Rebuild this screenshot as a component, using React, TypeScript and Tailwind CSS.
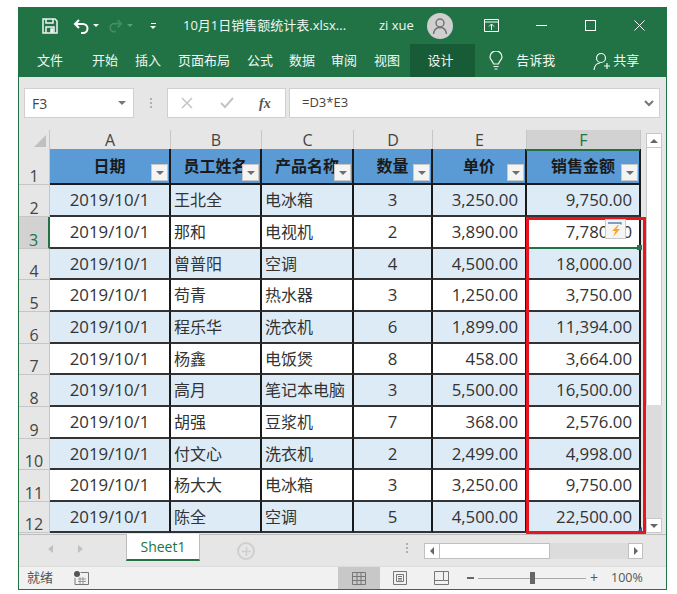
const font = { fontFamily: '"Open Sans","Noto Sans CJK SC",sans-serif' };

const rows: [string, string, string, string, string, string][] = [
  ['2019/10/1', '王北全', '电冰箱', '3', '3,250.00', '9,750.00'],
  ['2019/10/1', '那和', '电视机', '2', '3,890.00', '7,780.00'],
  ['2019/10/1', '曾普阳', '空调', '4', '4,500.00', '18,000.00'],
  ['2019/10/1', '苟青', '热水器', '3', '1,250.00', '3,750.00'],
  ['2019/10/1', '程乐华', '洗衣机', '6', '1,899.00', '11,394.00'],
  ['2019/10/1', '杨鑫', '电饭煲', '8', '458.00', '3,664.00'],
  ['2019/10/1', '高月', '笔记本电脑', '3', '5,500.00', '16,500.00'],
  ['2019/10/1', '胡强', '豆浆机', '7', '368.00', '2,576.00'],
  ['2019/10/1', '付文心', '洗衣机', '2', '2,499.00', '4,998.00'],
  ['2019/10/1', '杨大大', '电冰箱', '3', '3,250.00', '9,750.00'],
  ['2019/10/1', '陈全', '空调', '5', '4,500.00', '22,500.00'],
];
const rowH = [32, 32, 31, 32, 32, 31, 32, 32, 31, 32, 31];
const cols = 'grid grid-cols-[31px_121px_91px_92px_79px_94px_114px]';

function Filter() {
  return (
    <div className="absolute right-[1px] bottom-[2px] w-[17px] h-[17px] bg-[#f4f4f4] border border-[#c8c8c8] flex items-center justify-center">
      <div className="w-0 h-0 border-l-[4px] border-r-[4px] border-t-[4px] border-l-transparent border-r-transparent border-t-[#6e6e6e]" />
    </div>
  );
}

function Head({ t }: { t: string }) {
  return (
    <div className="relative bg-[#5b9bd5] border-r-2 border-b-2 border-[#1a1a1a] flex justify-center overflow-hidden">
      <span className="text-[16px] leading-[24px] font-bold text-[#1a1a1a] mt-[5px] whitespace-nowrap">{t}</span>
      <Filter />
    </div>
  );
}

function Cell({ t, align, band, selected, cjk }: { t: string; align: string; band: boolean; selected?: boolean; cjk?: boolean }) {
  return (
    <div className={`relative flex items-center ${align} ${band ? 'bg-[#ddebf7]' : 'bg-white'} border-r-2 border-b-2 ${selected ? 'border-b-[#217346]' : 'border-b-[#333333]'} border-r-[#1a1a1a] ${cjk ? 'text-[16px]' : 'text-[16.8px]'} text-[#333333] overflow-hidden whitespace-nowrap`}>
      {t}
    </div>
  );
}

function RowNo({ n, h, active }: { n: number; h: number; active?: boolean }) {
  return (
    <div style={{ height: h }} className={`flex items-end justify-center text-[16px] leading-none border-b border-[#c6c6c6] ${active ? 'bg-[#d2d2d2] text-[#217346] border-r-2 border-r-[#217346]' : 'bg-[#e6e6e6] text-[#444444] border-r border-r-[#c6c6c6]'}`}>
      {n}
    </div>
  );
}

function ColHead({ t, active }: { t: string; active?: boolean }) {
  return <div className={`flex items-center justify-center text-[16px] leading-none border-r border-[#c6c6c6] ${active ? 'bg-[#d2d2d2] text-[#217346]' : 'text-[#444444]'}`}>{t}</div>;
}

export default function App() {
  return (
    <div className="w-[677px] h-[594px] bg-white pt-[7px] pl-[18px]" style={font}>
      <div className="relative w-[649px] h-[583px] bg-[#e6e6e6] border-l border-r border-b border-[#217346] flex flex-col overflow-hidden">
        {/* Title bar */}
        <div className="h-[37px] bg-[#217346] flex items-center text-white shrink-0">
          <svg className="ml-[23px]" width="16" height="16" viewBox="0 0 16 16" fill="none" stroke="#f0f5f2" strokeWidth="1.5">
            <path d="M1 1h12l2 2v12H1z" /><path d="M4 1v4h7V1M4 15V9h8v6" /><path fill="#f0f5f2" d="M9 11h1.5v3H9z" />
          </svg>
          <svg className="ml-[15px]" width="17" height="16" viewBox="0 0 17 16" fill="none" stroke="#ffffff" strokeWidth="2">
            <path d="M6 2 2 6l4 4" /><path d="M2 6h8a4.5 4.5 0 0 1 0 9H8" />
          </svg>
          <div className="ml-[3px] w-0 h-0 border-l-[3px] border-r-[3px] border-t-[3px] border-l-transparent border-r-transparent border-t-white" />
          <svg className="ml-[9px] opacity-60" width="15" height="15" viewBox="0 0 17 16" fill="none" stroke="#5f9c7c" strokeWidth="2">
            <path d="M11 2l4 4-4 4" /><path d="M15 6H7a4.5 4.5 0 0 0 0 9h2" />
          </svg>
          <div className="ml-[4px] w-0 h-0 border-l-[3px] border-r-[3px] border-t-[3px] border-l-transparent border-r-transparent border-t-[#5f9c7c]" />
          <div className="ml-[17px] flex flex-col items-center gap-[2px]">
            <div className="w-[5px] h-[1px] bg-white" />
            <div className="w-0 h-0 border-l-[3px] border-r-[3px] border-t-[3px] border-l-transparent border-r-transparent border-t-white" />
          </div>
          <span className="ml-[27px] w-[180px] text-[13px] whitespace-nowrap text-[#f2f7f4]">10月1日销售额统计表.xlsx...</span>
          <span className="ml-[16px] text-[13px] text-[#f2f7f4]">zi xue</span>
          <div className="ml-[13px] w-[26px] h-[26px] rounded-full bg-[#cfcfcf] flex items-center justify-center">
            <svg width="18" height="18" viewBox="0 0 18 18" fill="none" stroke="#707070" strokeWidth="1.4">
              <circle cx="9" cy="6" r="4" /><path d="M2.5 17c.5-4 3-6.5 6.5-6.5s6 2.500 6.500 6.500" />
            </svg>
          </div>
          <svg className="ml-[31px]" width="15" height="13" viewBox="0 0 15 13" fill="none" stroke="#ffffff" strokeWidth="1">
            <path d="M.5.5h14v12H.5zM.5 3h14M7.500 11V5.500M5 7.500l2.500-2.500L10 7.500" />
          </svg>
          <div className="ml-[37px] w-[11px] h-[1px] bg-white" />
          <div className="ml-[38px] w-[11px] h-[11px] border border-white" />
          <svg className="ml-[38px]" width="11" height="11" viewBox="0 0 11 11" stroke="#ffffff" strokeWidth="1"><path d="M.5.5l10 10M10.500.5l-10 10" /></svg>
        </div>
        {/* Ribbon tabs */}
        <div className="h-[33px] bg-[#217346] flex items-center text-[13px] text-[#f2f7f4] shrink-0 relative">
          <span className="ml-[18px]">文件</span>
          <span className="ml-[29px]">开始</span>
          <span className="ml-[17px]">插入</span>
          <span className="ml-[17px]">页面布局</span>
          <span className="ml-[17px]">公式</span>
          <span className="ml-[16px]">数据</span>
          <span className="ml-[16px]">审阅</span>
          <span className="ml-[17px]">视图</span>
          <div className="ml-[10px] w-[65px] h-full bg-[#185c37] flex items-center justify-center pr-[4px]">设计</div>
          <svg className="ml-[14px]" width="14" height="19" viewBox="0 0 14 19" fill="none" stroke="#f2f7f4" strokeWidth="1.200">
            <path d="M4.500 13C4 10 1 9 1 6a6 6 0 0 1 12 0c0 3-3 4-3.500 7zM4.500 15.500h5M5.500 18h3" />
          </svg>
          <span className="ml-[13px]">告诉我</span>
          <svg className="ml-[38px]" width="17" height="18" viewBox="0 0 17 18" fill="none" stroke="#f2f7f4" strokeWidth="1.200">
            <circle cx="8" cy="6" r="4.500" /><path d="M1 18c.5-4 3-7 6-7M11 14h6M14 11v6" />
          </svg>
          <span className="ml-[3px]">共享</span>
        </div>
        {/* Formula bar */}
        <div className="h-[53px] shrink-0 flex items-start pt-[11px] pl-[5px] text-[13px] text-[#444444]">
          <div className="w-[110px] h-[30px] bg-white border border-[#d0d0d0] flex items-center justify-between pl-[7px] pr-[7px]">
            <span className="text-[14px]">F3</span>
            <div className="w-0 h-0 border-l-[4px] border-r-[4px] border-t-[4px] border-l-transparent border-r-transparent border-t-[#777777]" />
          </div>
          <div className="w-[33px] h-[30px] flex flex-col items-center justify-center gap-[2px]">
            <div className="w-[2px] h-[2px] bg-[#b0b0b0]" /><div className="w-[2px] h-[2px] bg-[#b0b0b0]" /><div className="w-[2px] h-[2px] bg-[#b0b0b0]" />
          </div>
          <div className="w-[119px] h-[30px] bg-white border border-[#d0d0d0] flex items-center">
            <svg className="ml-[13px]" width="12" height="12" viewBox="0 0 12 12" stroke="#c4c4c4" strokeWidth="1.500"><path d="M1 1l10 10M11 1 1 11" /></svg>
            <svg className="ml-[27px]" width="14" height="12" viewBox="0 0 14 12" fill="none" stroke="#c4c4c4" strokeWidth="2"><path d="M1 6l4 4 8-9" /></svg>
            <span className="ml-[25px] text-[14px] italic font-bold text-[#555555]" style={{ fontFamily: '"Liberation Serif",serif' }}>fx</span>
          </div>
          <div className="ml-[3px] w-[371px] h-[30px] bg-white border border-[#d0d0d0] flex items-center justify-between pl-[12px] pr-[5px]">
            <span>=D3*E3</span>
            <svg width="10" height="7" viewBox="0 0 10 7" fill="none" stroke="#777777" strokeWidth="2"><path d="M1 1l4 4 4-4" /></svg>
          </div>
        </div>
        {/* Grid + scrollbar */}
        <div className="flex h-[404px] shrink-0 relative">
          <div className="w-[622px] shrink-0 overflow-hidden">
            <div className={`${cols} h-[19px]`}>
              <div className="relative border-r border-[#c6c6c6]">
                <div className="absolute right-[3px] bottom-[2px] w-0 h-0 border-l-[12px] border-b-[12px] border-l-transparent border-b-[#c0c0c0]" />
              </div>
              <ColHead t="A" /><ColHead t="B" /><ColHead t="C" /><ColHead t="D" /><ColHead t="E" /><ColHead t="F" active />
            </div>
            <div className="flex">
              <div className="w-[31px] shrink-0">
                <RowNo n={1} h={36} />
                {rows.map((_, i) => <RowNo key={i} n={i + 2} h={rowH[i]} active={i === 1} />)}
              </div>
              <div className="flex-1">
                <div className="grid grid-cols-[121px_91px_92px_79px_94px_114px] h-[36px]">
                  <Head t="日期" /><Head t="员工姓名" /><Head t="产品名称" /><Head t="数量" /><Head t="单价" /><Head t="销售金额" />
                </div>
                {rows.map((r, i) => (
                  <div key={i} style={{ height: rowH[i] }} className="grid grid-cols-[121px_91px_92px_79px_94px_114px]">
                    <Cell t={r[0]} align="justify-center" band={i % 2 === 0} />
                    <Cell t={r[1]} align="pl-[3px]" band={i % 2 === 0} cjk />
                    <Cell t={r[2]} align="pl-[3px]" band={i % 2 === 0} cjk />
                    <Cell t={r[3]} align="justify-center" band={i % 2 === 0} />
                    <Cell t={r[4]} align="justify-end pr-[7px]" band={i % 2 === 0} />
                    <Cell t={r[5]} align="justify-end pr-[7px]" band={i % 2 === 0} selected={i === 1} />
                  </div>
                ))}
              </div>
            </div>
          </div>
          {/* Vertical scrollbar */}
          <div className="w-[25px] pl-[5px] pr-[4px] pt-[3px] pb-[1px] flex flex-col">
            <div className="h-[15px] bg-white border border-[#c8c8c8] flex items-center justify-center">
              <div className="w-0 h-0 border-l-[4px] border-r-[4px] border-b-[4px] border-l-transparent border-r-transparent border-b-[#666666]" />
            </div>
            <div className="h-[257px] bg-white border-x border-[#c8c8c8]" />
            <div className="flex-1 bg-[#dcdcdc]" />
            <div className="h-[15px] bg-white border border-[#c8c8c8] flex items-center justify-center">
              <div className="w-0 h-0 border-l-[4px] border-r-[4px] border-t-[4px] border-l-transparent border-r-transparent border-t-[#666666]" />
            </div>
          </div>
        </div>
        {/* Sheet tab bar */}
        <div className="h-[32px] shrink-0 flex items-start relative border-t border-[#bdbdbd]">
          <div className="ml-[29px] mt-[10px] flex gap-[25px]">
            <div className="w-0 h-0 border-t-[4px] border-b-[4px] border-r-[5px] border-t-transparent border-b-transparent border-r-[#c0c0c0]" />
            <div className="w-0 h-0 border-t-[4px] border-b-[4px] border-l-[5px] border-t-transparent border-b-transparent border-l-[#c0c0c0]" />
          </div>
          <div className="ml-[43px] -mt-[1px] w-[74px] h-[27px] bg-white border-x border-[#bdbdbd] border-b-2 border-b-[#217346] flex items-center justify-center text-[14px] text-[#217346]">Sheet1</div>
          <div className="ml-[37px] mt-[7px] w-[18px] h-[18px] rounded-full border-2 border-[#cfcfcf] flex items-center justify-center">
            <svg width="9" height="9" viewBox="0 0 9 9" stroke="#cfcfcf" strokeWidth="1.500"><path d="M4.500 0v9M0 4.500h9" /></svg>
          </div>
          <div className="ml-[151px] mt-[8px] flex flex-col gap-[2px]">
            <div className="w-[2px] h-[2px] bg-[#b0b0b0]" /><div className="w-[2px] h-[2px] bg-[#b0b0b0]" /><div className="w-[2px] h-[2px] bg-[#b0b0b0]" />
          </div>
          <div className="ml-[16px] mt-[8px] w-[219px] h-[16px] flex bg-[#dcdcdc]">
            <div className="w-[16px] bg-white border border-[#c0c0c0] flex items-center justify-center">
              <div className="w-0 h-0 border-t-[4px] border-b-[4px] border-r-[4px] border-t-transparent border-b-transparent border-r-[#666666]" />
            </div>
            <div className="w-[110px] bg-white border-y border-r border-[#c0c0c0]" />
            <div className="flex-1" />
            <div className="w-[15px] bg-white border border-[#c0c0c0] flex items-center justify-center">
              <div className="w-0 h-0 border-t-[4px] border-b-[4px] border-l-[4px] border-t-transparent border-b-transparent border-l-[#666666]" />
            </div>
          </div>
        </div>
        {/* Status bar */}
        <div className="flex-1 bg-[#f1f1f1] border-t border-[#dcdcdc] flex items-center text-[13px] text-[#555555]">
          <span className="ml-[8px]">就绪</span>
          <svg className="ml-[21px]" width="15" height="14" viewBox="0 0 15 14" fill="none">
            <circle cx="3" cy="3" r="3" fill="#555555" /><path d="M6.500 1.500h8v12H1V7" stroke="#777777" /><path d="M4 8h8M4 10.500h8M6 6v7M9 6v7" stroke="#999999" />
          </svg>
          <div className="ml-[249px] w-[42px] h-full bg-[#c8c8c8] flex items-center justify-center">
            <svg width="14" height="13" viewBox="0 0 14 13" fill="none" stroke="#777777"><path d="M.5.500h13v12H.5zM.5 4.500h13M.5 8.500h13M5 .5v12M9 .5v12" /></svg>
          </div>
          <svg className="ml-[13px]" width="14" height="14" viewBox="0 0 14 14" fill="none" stroke="#777777"><path d="M.5.500h13v13H.5zM3.500 3.500h7v7h-7zM5 5.500h4M5 7.500h4M5 9h4" /></svg>
          <svg className="ml-[27px]" width="15" height="14" viewBox="0 0 15 14" fill="none" stroke="#777777"><path d="M.5.500h14v13H.5zM.5 9.500h9V.5M10 9.500h4.500" /></svg>
          <div className="ml-[18px] w-[7px] h-[2px] bg-[#666666]" />
          <div className="ml-[4px] w-[108px] h-[1px] bg-[#a8a8a8] relative">
            <div className="absolute left-[52px] -top-[6px] w-[5px] h-[12px] bg-[#666666]" />
          </div>
          <span className="ml-[4px] text-[14px] leading-none text-[#555555]">+</span>
          <span className="ml-[13px] text-[12.5px]">100%</span>
        </div>
        {/* Red highlight */}
        <div className="absolute left-[507px] top-[210px] w-[120px] h-[317px] border-[3px] border-[#e8141f] pointer-events-none" />
        {/* F1 selected top line */}
        <div className="absolute left-[507px] top-[142px] w-[114px] h-[2px] bg-[#217346]" />
        {/* Fill handle */}
        <div className="absolute left-[618px] top-[238px] w-[5px] h-[5px] bg-[#217346]" />
        {/* Table resize corner */}
        <div className="absolute left-[619px] top-[520px] w-0 h-0 border-l-[4px] border-b-[4px] border-l-transparent border-b-[#2f5f9e]" />
        {/* Quick analysis tag */}
        <div className="absolute left-[586px] top-[212px] w-[21px] h-[20px] bg-[#f5f5f5] border border-[#c8c8c8] flex items-center justify-center">
          <svg width="17" height="17" viewBox="0 0 17 17">
            <path d="M1 2h13v1.500" fill="none" stroke="#5b7fb5" strokeWidth="1.300" />
            <path d="M11 4 5 10h3.500L6 16l7-8H9.500L12 4z" fill="#f0a830" />
          </svg>
        </div>
      </div>
    </div>
  );
}
